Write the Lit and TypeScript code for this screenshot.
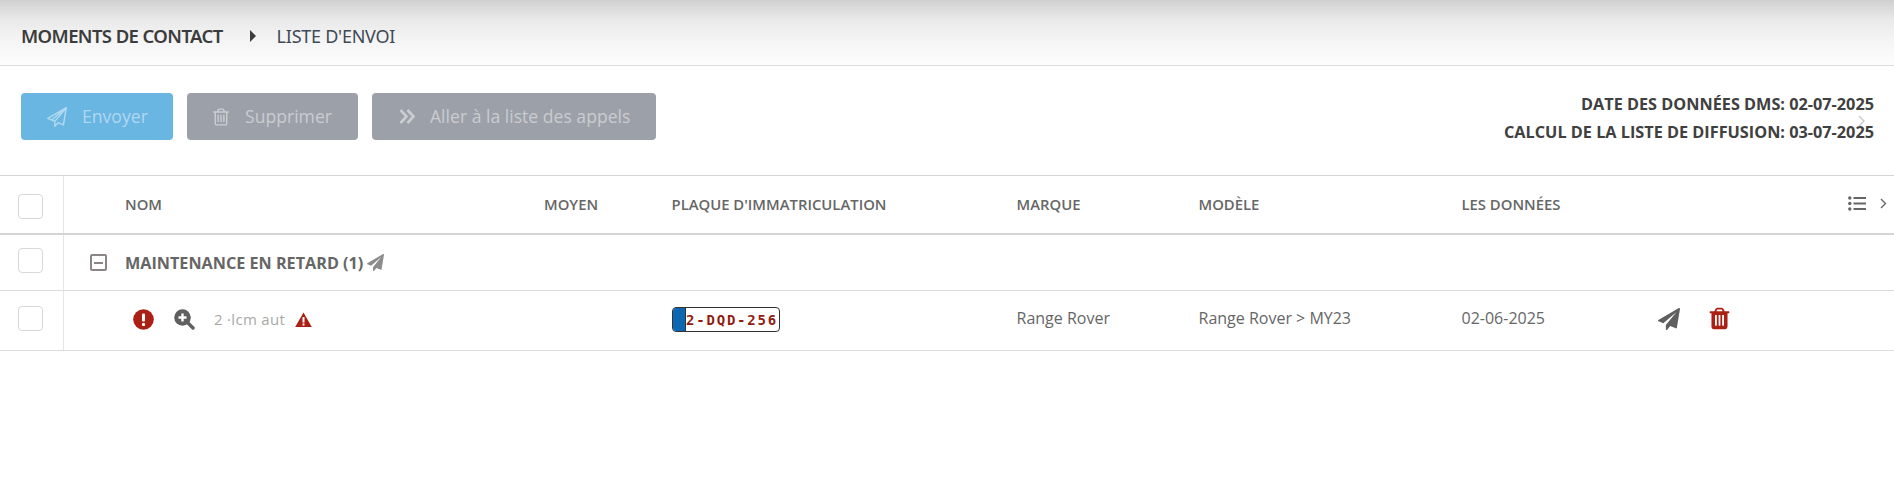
import { LitElement, html, css, svg } from "lit";
import { customElement } from "lit/decorators.js";

const plane = svg`<path d="M1764 11q33 24 27 64l-256 1536q-5 29-32 45-14 8-31 8-11 0-24-5l-453-185-242 295q-18 23-49 23-13 0-22-4-19-7-30.5-23.5t-11.5-36.5v-349l864-1059-1069 925-395-162q-37-14-40-55-2-40 32-59l1664-960q15-9 32-9 20 0 36 11z"/>`;
const planeO = svg`<path d="M1730 60L1470 1600 1000 1400 700 1730V1290L70 1020ZM1730 60L700 1290M1730 60L420 1170" fill="none" stroke="currentColor" stroke-width="130" stroke-linejoin="round"/>`;
const trash = svg`<path d="M704 1376v-704q0-14-9-23t-23-9h-64q-14 0-23 9t-9 23v704q0 14 9 23t23 9h64q14 0 23-9t9-23zm256 0v-704q0-14-9-23t-23-9h-64q-14 0-23 9t-9 23v704q0 14 9 23t23 9h64q14 0 23-9t9-23zm256 0v-704q0-14-9-23t-23-9h-64q-14 0-23 9t-9 23v704q0 14 9 23t23 9h64q14 0 23-9t9-23zm-544-992h448l-48-117q-7-9-17-11h-317q-10 2-17 11zm928 32v64q0 14-9 23t-23 9h-96v948q0 83-47 143.500t-113 60.500h-832q-66 0-113-58.500t-47-141.500v-952h-96q-14 0-23-9t-9-23v-64q0-14 9-23t23-9h309l70-167q15-37 54-63t79-26h320q40 0 79 26t54 63l70 167h309q14 0 23 9t9 23z"/>`;
const trashO = svg`<path d="M704 736v576q0 14-9 23t-23 9h-64q-14 0-23-9t-9-23v-576q0-14 9-23t23-9h64q14 0 23 9t9 23zm256 0v576q0 14-9 23t-23 9h-64q-14 0-23-9t-9-23v-576q0-14 9-23t23-9h64q14 0 23 9t9 23zm256 0v576q0 14-9 23t-23 9h-64q-14 0-23-9t-9-23v-576q0-14 9-23t23-9h64q14 0 23 9t9 23zm128 724v-948h-896v948q0 22 7 40.500t14.500 27 10.500 8.500h832q3 0 10.500-8.500t14.500-27 7-40.500zm-672-1076h448l-48-117q-7-9-17-11h-317q-10 2-17 11zm928 32v64q0 14-9 23t-23 9h-96v948q0 83-47 143.500t-113 60.500h-832q-66 0-113-58.500t-47-141.500v-952h-96q-14 0-23-9t-9-23v-64q0-14 9-23t23-9h309l70-167q15-37 54-63t79-26h320q40 0 79 26t54 63l70 167h309q14 0 23 9t9 23z"/>`;

const icon = (body: unknown, size: number, cls = "") =>
  html`<svg class=${cls} width=${size} height=${size} viewBox="0 0 1792 1792" fill="currentColor">${body}</svg>`;

@customElement("plate-tag")
class PlateTag extends LitElement {
  static styles = css`
    :host { display: inline-flex; height: 25px; width: 108px; box-sizing: border-box; border: 1px solid #333; border-radius: 4px; overflow: hidden; background: #fff; vertical-align: top; }
    .eu { width: 12px; background: #0b67b2; border-right: 1px solid #333; flex: none; }
    .num { flex: 1; display: flex; align-items: center; justify-content: center; font: 700 14px "DejaVu Sans Mono", monospace; color: #8f1d12; letter-spacing: 1.8px; white-space: nowrap; }
  `;
  render() {
    return html`<span class="eu"></span><span class="num">2-DQD-256</span>`;
  }
}

@customElement("app-root")
export class AppRoot extends LitElement {
  static styles = css`
    :host { display: block; width: 1894px; height: 478px; background: #fff; font-family: "Open Sans", sans-serif; color: #5f5f5f; position: relative; overflow: hidden; }
    .crumbs { height: 66px; box-sizing: border-box; border-bottom: 1px solid #dcdcdc; background: linear-gradient(#d0d0d0, #e9e9e9 30%, #f4f4f4 60%, #fdfdfd); display: flex; align-items: center; padding: 6px 0 0 21px; font-family: "Noto Sans", sans-serif; }
    .crumbs b { font-weight: 600; font-size: 18.5px; color: #3c3c3c; letter-spacing: -0.6px; }
    .crumbs .sep { width: 0; height: 0; border-left: 6px solid #3c3c3c; border-top: 6px solid transparent; border-bottom: 6px solid transparent; margin: 0 21px 0 27px; }
    .crumbs span.cur { color: #3f4a55; font-size: 18px; letter-spacing: -0.25px; }
    .bar { display: flex; justify-content: space-between; padding: 27px 20px 0 21px; height: 82px; }
    .btns { display: flex; gap: 14px; height: 47px; }
    .btn { display: flex; align-items: center; gap: 14px; padding-left: 27px; border-radius: 4px; font-size: 17.6px; color: rgba(255,255,255,.48); background: #9ca0a8; box-sizing: border-box; }
    .btn span { margin-top: -2px; }
    .btn.send { background: #69b6e3; width: 152px; gap: 15px; padding-left: 26px; }
    .btn.del { width: 171px; padding-left: 24px; }
    .btn.go { width: 284px; }
    .dates { text-align: right; font-weight: 700; font-size: 16.25px; line-height: 28px; color: #404040; white-space: nowrap; margin-top: -3px; }
    .overlay-chev { position: absolute; left: 1858px; top: 115px; color: #c9c9c9; }
    .row { display: grid; grid-template-columns: 64px 61px 419px 127.5px 345px 182px 263px 196px 1fr; align-items: center; border-bottom: 1px solid #dcdcdc; }
    .head { border-top: 1px solid #d4d4d4; border-bottom: 2px solid #d4d4d4; height: 57px; font-weight: 600; font-size: 14.85px; color: #666; box-sizing: content-box; }
    .head > div:not(.cb) { margin-top: -2px; }
    .head .cb i { margin-top: 4px; }
    .group { height: 55px; font-weight: 700; font-size: 16.2px; color: #666; }
    .group .cb i { margin-top: -4px; }
    .data { height: 59px; font-size: 16px; color: #666; }
    .data .cb i { margin-top: -4px; }
    .cb { height: 100%; border-right: 1px solid #e6e6e6; display: flex; align-items: center; padding-left: 18px; box-sizing: border-box; }
    .cb i { display: block; width: 25px; height: 25px; box-sizing: border-box; border: 1px solid #d6d8da; border-radius: 4px; background: #fff; }
    .expander { display: flex; justify-content: flex-end; padding-right: 18px; }
    .span { grid-column: 3 / -1; display: flex; align-items: center; gap: 4px; }
    .name { grid-column: 2 / 4; display: flex; align-items: center; padding-left: 69px; box-sizing: border-box; margin-top: -3px; }
    .plain { color: #8c8c8c; }
    .sq { width: 17px; height: 17px; box-sizing: border-box; border: 2px solid #8c8585; border-radius: 2px; display: flex; align-items: center; justify-content: center; }
    .sq::after { content: ""; width: 9px; height: 2px; background: #8c8585; }
    .blur { font-size: 15px; color: #a8a8a8; letter-spacing: 0.3px; margin: 0 11px 0 19px; width: 70px; white-space: pre; }
    .red { color: #aa2015; display: flex; }
    .dark { color: #5f5f5f; display: flex; }
    .txt { margin-top: -5px; }
    .plate { margin: -2px 0 0 0; }
    .actions { display: flex; align-items: center; gap: 27px; margin-top: -4px; }
    .cols { display: flex; align-items: center; justify-content: flex-end; gap: 14px; padding-right: 7px; }
    .mag { margin-left: 20px; }
  `;

  render() {
    return html`
      <div class="crumbs"><b>MOMENTS DE CONTACT</b><span class="sep"></span><span class="cur">LISTE D'ENVOI</span></div>
      <div class="bar">
        <div class="btns">
          <div class="btn send">${icon(planeO, 20)}<span>Envoyer</span></div>
          <div class="btn del">${icon(trashO, 20)}<span>Supprimer</span></div>
          <div class="btn go">
            <svg width="17" height="17" viewBox="0 0 17 17" fill="none" stroke="currentColor" stroke-width="2.6"><path d="M1.500 2l6 6.500-6 6.500M8.500 2l6 6.500-6 6.500"/></svg>
            <span>Aller à la liste des appels</span>
          </div>
        </div>
        <div class="dates">DATE DES DONNÉES DMS: 02-07-2025<br />CALCUL DE LA LISTE DE DIFFUSION: 03-07-2025</div>
      </div>
      <svg class="overlay-chev" width="8" height="12" viewBox="0 0 8 12" fill="none" stroke="currentColor" stroke-width="1.300"><path d="M1 1l5 5-5 5"/></svg>

      <div class="row head">
        <div class="cb"><i></i></div><div></div>
        <div>NOM</div><div>MOYEN</div><div>PLAQUE D'IMMATRICULATION</div><div>MARQUE</div><div>MODÈLE</div><div>LES DONNÉES</div>
        <div class="cols">
          <svg width="18" height="15" viewBox="0 0 18 15" fill="currentColor"><circle cx="1.800" cy="2" r="1.700"/><circle cx="1.800" cy="7.500" r="1.700"/><circle cx="1.800" cy="13" r="1.700"/><rect x="5.500" y="1" width="12.500" height="2"/><rect x="5.500" y="6.500" width="12.500" height="2"/><rect x="5.500" y="12" width="12.500" height="2"/></svg>
          <svg width="7" height="11" viewBox="0 0 7 11" fill="none" stroke="currentColor" stroke-width="1.400"><path d="M1 1l4.500 4.500L1 10"/></svg>
        </div>
      </div>
      <div class="row group">
        <div class="cb"><i></i></div>
        <div class="expander"><span class="sq"></span></div>
        <div class="span">MAINTENANCE EN RETARD (1) ${icon(plane, 17, "plain")}</div>
      </div>
      <div class="row data">
        <div class="cb"><i></i></div>
        <div class="name">
          <span class="red"><svg width="21" height="21" viewBox="0 0 21 21"><circle cx="10.500" cy="10.500" r="10.300" fill="currentColor"/><rect x="9" y="4.500" width="3" height="8" rx="1" fill="#fff"/><rect x="9" y="14" width="3" height="3" rx=".8" fill="#fff"/></svg></span>
          <span class="dark mag"><svg width="21" height="21" viewBox="0 0 21 21"><path d="M13 13l6 6" stroke="currentColor" stroke-width="3.400" stroke-linecap="round"/><circle cx="8.500" cy="8.500" r="8.300" fill="currentColor"/><path d="M8.500 4.500v8M4.500 8.500h8" stroke="#fff" stroke-width="2.400"/></svg></span>
          <span class="blur">2 ·lcm aut</span>
          <span class="red"><svg width="17" height="15" viewBox="0 0 17 15"><path d="M8.500 0.500L16.800 15H.2z" fill="currentColor"/><rect x="7.500" y="5" width="2" height="5.500" fill="#fff"/><rect x="7.500" y="11.500" width="2" height="2" fill="#fff"/></svg></span>
        </div>
        <div></div>
        <div class="plate"><plate-tag></plate-tag></div>
        <div class="txt">Range Rover</div>
        <div class="txt">Range Rover &gt; MY23</div>
        <div class="txt">02-06-2025</div>
        <div class="actions">
          <span class="dark">${icon(plane, 22)}</span>
          <span class="red">${icon(trash, 25)}</span>
        </div>
      </div>
    `;
  }
}
void PlateTag;
